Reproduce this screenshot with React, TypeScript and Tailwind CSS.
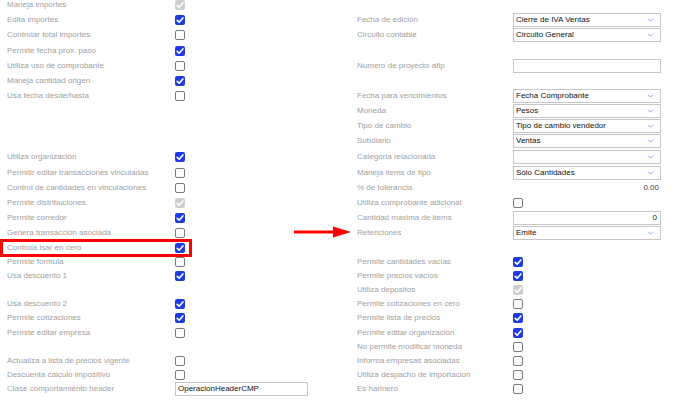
import React from "react";
import clsx from "clsx";

type Ctl =
  | { t: "cb"; on?: boolean; dis?: boolean }
  | { t: "sel"; v: string }
  | { t: "inp"; v: string; right?: boolean }
  | { t: "txt"; v: string };

type Cell = [string, Ctl];
type Row = { h: string; l?: Cell; r?: Cell };

const cb = (on = false, dis = false): Ctl => ({ t: "cb", on, dis });
const sel = (v: string): Ctl => ({ t: "sel", v });

const rows: Row[] = [
  { h: "h-[14px]", l: ["Maneja importes", cb(true, true)] },
  { h: "h-[15px]", l: ["Edita importes", cb(true)], r: ["Fecha de edición", sel("Cierre de IVA Ventas")] },
  { h: "h-[16px]", l: ["Controlar total importes", cb()], r: ["Circuito contable", sel("Circuito General")] },
  { h: "h-[15px]", l: ["Permite fecha prox. paso", cb(true)] },
  { h: "h-[15px]", l: ["Utiliza uso de comprobante", cb()], r: ["Numero de proyecto afip", { t: "inp", v: "" }] },
  { h: "h-[15px]", l: ["Maneja cantidad origen", cb(true)] },
  { h: "h-[15px]", l: ["Usa fecha desde/hasta", cb()], r: ["Fecha para vencimientos", sel("Fecha Comprobante")] },
  { h: "h-[15px]", r: ["Moneda", sel("Pesos")] },
  { h: "h-[15px]", r: ["Tipo de cambio", sel("Tipo de cambio vendedor")] },
  { h: "h-[16px]", r: ["Subdiario", sel("Ventas")] },
  { h: "h-[16px]", l: ["Utiliza organización", cb(true)], r: ["Categoria relacionada", sel("")] },
  { h: "h-[15px]", l: ["Permitir editar transacciones vinculadas", cb()], r: ["Maneja items de tipo", sel("Sólo Cantidades")] },
  { h: "h-[15px]", l: ["Control de cantidades en vinculaciones", cb()], r: ["% de tolerancia", { t: "txt", v: "0.00" }] },
  { h: "h-[15px]", l: ["Permite distribuciones", cb(true, true)], r: ["Utiliza comprobante adicional", cb()] },
  { h: "h-[15px]", l: ["Permite corredor", cb(true)], r: ["Cantidad maxima de items", { t: "inp", v: "0", right: true }] },
  { h: "h-[15px]", l: ["Genera transacción asociada", cb()], r: ["Retenciones", sel("Emite")] },
  { h: "h-[15px]", l: ["Controla isar en cero", cb(true)] },
  { h: "h-[14px]", l: ["Permite formula", cb()], r: ["Permite cantidades vacías", cb(true)] },
  { h: "h-[14px]", l: ["Usa descuento 1", cb(true)], r: ["Permite precios vacíos", cb(true)] },
  { h: "h-[14px]", r: ["Utiliza depositos", cb(true, true)] },
  { h: "h-[14px]", l: ["Usa descuento 2", cb(true)], r: ["Permite cotizaciones en cero", cb()] },
  { h: "h-[14px]", l: ["Permite cotizaciones", cb(true)], r: ["Permite lista de precios", cb(true)] },
  { h: "h-[15px]", l: ["Permite editar empresa", cb()], r: ["Permite editar organización", cb(true)] },
  { h: "h-[14px]", r: ["No permite modificar moneda", cb()] },
  { h: "h-[14px]", l: ["Actualiza a lista de precios vigente", cb()], r: ["Informa empresas asociadas", cb()] },
  { h: "h-[14px]", l: ["Descuenta calculo impositivo", cb()], r: ["Utiliza despacho de importacion", cb()] },
  { h: "h-[13px]", l: ["Clase comportamiento header", { t: "inp", v: "OperacionHeaderCMP" }], r: ["Es harinero", cb()] },
];

const Check = ({ on, dis }: { on?: boolean; dis?: boolean }) => {
  if (!on)
    return <span className="block h-[10px] w-[10px] rounded-[2px] border border-[#7a7a7a] bg-white" />;
  return (
    <span
      className={clsx(
        "flex h-[10px] w-[10px] items-center justify-center rounded-[2px]",
        dis ? "bg-[#cfcfcf]" : "bg-[#1e3be3]",
      )}
    >
      <svg viewBox="0 0 10 10" className="h-[10px] w-[10px]">
        <path d="M2.2 5.3 L4.2 7.2 L7.9 2.9" fill="none" stroke="white" strokeWidth="1.6" strokeLinecap="round" strokeLinejoin="round" />
      </svg>
    </span>
  );
};

const Chevron = () => (
  <svg viewBox="0 0 8 5" className="h-[4px] w-[7px]">
    <path d="M0.8 0.8 L4 4 L7.2 0.8" fill="none" stroke="#6b9cf0" strokeWidth="1.1" />
  </svg>
);

const Control = ({ c, wide }: { c: Ctl; wide?: boolean }) => {
  switch (c.t) {
    case "cb":
      return <Check on={c.on} dis={c.dis} />;
    case "sel":
      return (
        <div className="flex h-[14px] w-[148px] items-center justify-between border border-[#c6c6c6] bg-white pl-[2px] pr-[6px] text-[#111]">
          <span className="leading-none">{c.v}</span>
          <Chevron />
        </div>
      );
    case "inp":
      return (
        <div
          className={clsx(
            "flex h-[14px] items-center border border-[#c6c6c6] bg-white px-[2px] text-[#111]",
            wide ? "w-[148px]" : "w-[133px]",
            c.right && "justify-end pr-[3px]",
          )}
        >
          <span className="leading-none">{c.v}</span>
        </div>
      );
    case "txt":
      return <div className="w-[148px] pr-[2px] text-right text-[#444]">{c.v}</div>;
  }
};

export default function App() {
  return (
    <div
      className="relative h-[403px] w-[690px] overflow-hidden bg-white text-[8px]"
      style={{ fontFamily: '"Liberation Sans", Arial, sans-serif' }}
    >
      <div className="-mt-[2px]">
        {rows.map((row, i) => (
          <div key={i} className={clsx("grid grid-cols-[175px_182px_156px_148px] items-center", row.h)}>
            <div className="pl-[7px] text-[#a0a0a0]">{row.l?.[0]}</div>
            <div className="flex items-center">{row.l && <Control c={row.l[1]} />}</div>
            <div className="text-[#a0a0a0]">{row.r?.[0]}</div>
            <div className="flex items-center">{row.r && <Control c={row.r[1]} wide />}</div>
          </div>
        ))}
      </div>

      {/* highlight box and arrow */}
      <div className="absolute left-0 top-[239px] h-[18px] w-[192px] border-[3px] border-[#f00]" />
      <svg viewBox="0 0 58 12" className="absolute left-[294px] top-[226px] h-[12px] w-[58px]">
        <path d="M0 6 H42" stroke="#f00" strokeWidth="3" />
        <path d="M39 0.5 L57 6 L39 11.5 Z" fill="#f00" />
      </svg>
    </div>
  );
}
